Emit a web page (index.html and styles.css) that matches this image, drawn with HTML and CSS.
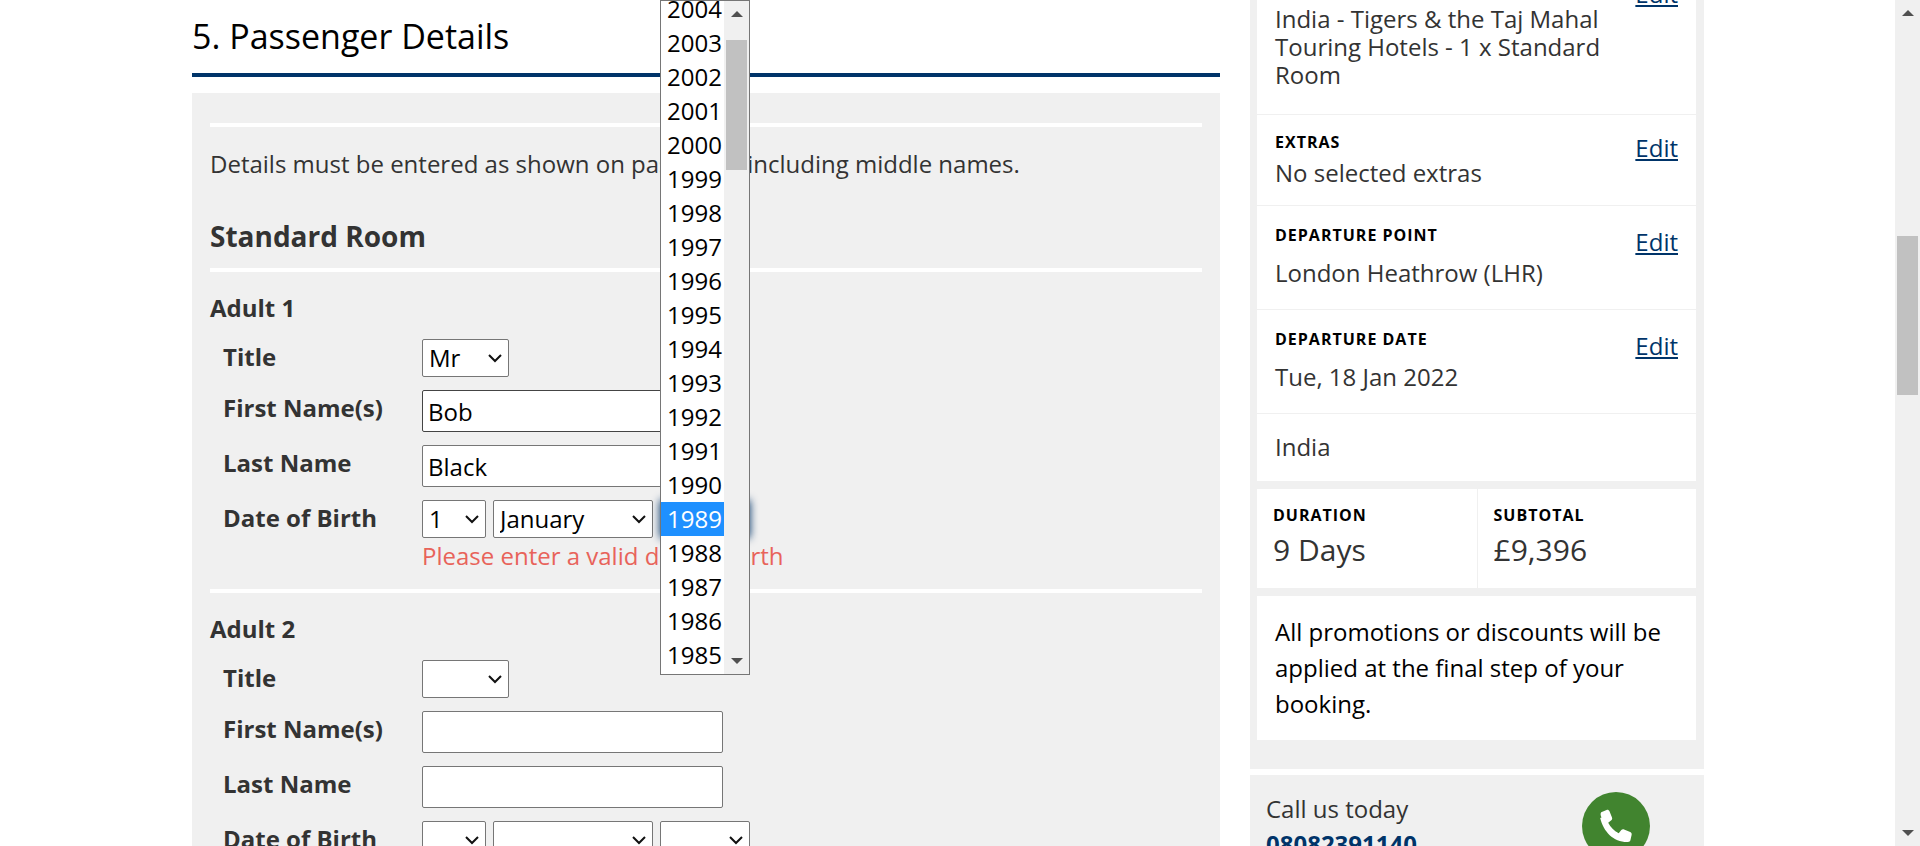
FILE: index.html
```html
<!DOCTYPE html>
<html lang="en">
<head>
<meta charset="utf-8">
<title>Passenger Details</title>
<link rel="stylesheet" href="styles.css">
</head>
<body>
<div class="page">
  <main class="main">
    <h1 class="step-title">5. Passenger Details</h1>
    <form class="panel">
      <hr class="rule rule-top">
      <p class="note">Details must be entered as shown on passports including middle names.</p>
      <h2 class="room">Standard Room</h2>
      <hr class="rule rule-room">

      <fieldset class="person">
        <legend class="person-name">Adult 1</legend>
        <div class="row">
          <label class="label" for="title1">Title</label>
          <select class="select w-title" id="title1"><option>Mr</option></select>
        </div>
        <div class="row">
          <label class="label" for="first1">First Name(s)</label>
          <input class="input input-hover" id="first1" type="text" value="Bob">
        </div>
        <div class="row">
          <label class="label" for="last1">Last Name</label>
          <input class="input" id="last1" type="text" value="Black">
        </div>
        <div class="row">
          <label class="label" for="day1">Date of Birth</label>
          <div class="dob">
            <select class="select w-day" id="day1"><option>1</option></select>
            <select class="select w-month" id="month1" aria-label="Month"><option>January</option></select>
            <div class="year-wrap">
              <select class="select w-year is-open" id="year1" aria-label="Year"><option></option></select>
              <div class="popup">
                <ul class="options" role="listbox" aria-label="Year">
                  <li class="option" role="option">2004</li>
                  <li class="option" role="option">2003</li>
                  <li class="option" role="option">2002</li>
                  <li class="option" role="option">2001</li>
                  <li class="option" role="option">2000</li>
                  <li class="option" role="option">1999</li>
                  <li class="option" role="option">1998</li>
                  <li class="option" role="option">1997</li>
                  <li class="option" role="option">1996</li>
                  <li class="option" role="option">1995</li>
                  <li class="option" role="option">1994</li>
                  <li class="option" role="option">1993</li>
                  <li class="option" role="option">1992</li>
                  <li class="option" role="option">1991</li>
                  <li class="option" role="option">1990</li>
                  <li class="option is-active" role="option" aria-selected="true">1989</li>
                  <li class="option" role="option">1988</li>
                  <li class="option" role="option">1987</li>
                  <li class="option" role="option">1986</li>
                  <li class="option" role="option">1985</li>
                </ul>
                <div class="scroll">
                  <svg class="arrow" viewBox="0 0 12 6"><path d="M0 6L6 0L12 6Z"/></svg>
                  <div class="track"><div class="thumb thumb-list"></div></div>
                  <svg class="arrow" viewBox="0 0 12 6"><path d="M0 0L6 6L12 0Z"/></svg>
                </div>
              </div>
            </div>
          </div>
        </div>
        <p class="error">Please enter a valid date of birth</p>
      </fieldset>
      <hr class="rule">

      <fieldset class="person">
        <legend class="person-name">Adult 2</legend>
        <div class="row">
          <label class="label" for="title2">Title</label>
          <select class="select w-title" id="title2"><option></option></select>
        </div>
        <div class="row">
          <label class="label" for="first2">First Name(s)</label>
          <input class="input" id="first2" type="text">
        </div>
        <div class="row">
          <label class="label" for="last2">Last Name</label>
          <input class="input" id="last2" type="text">
        </div>
        <div class="row">
          <label class="label" for="day2">Date of Birth</label>
          <div class="dob">
            <select class="select w-day" id="day2"><option></option></select>
            <select class="select w-month" id="month2" aria-label="Month"><option></option></select>
            <select class="select w-year" id="year2" aria-label="Year"><option></option></select>
          </div>
        </div>
      </fieldset>
    </form>
  </main>

  <aside class="side">
    <section class="summary">
      <div class="card">
        <div class="item item-rooms">
          <p class="item-text">India - Tigers &amp; the Taj Mahal Touring Hotels - 1 x Standard Room</p>
          <a class="edit" href="#">Edit</a>
        </div>
        <div class="item item-tight">
          <div>
            <h3 class="tag">Extras</h3>
            <p class="item-text">No selected extras</p>
          </div>
          <a class="edit" href="#">Edit</a>
        </div>
        <div class="item">
          <div>
            <h3 class="tag">Departure Point</h3>
            <p class="item-text">London Heathrow (LHR)</p>
          </div>
          <a class="edit" href="#">Edit</a>
        </div>
        <div class="item">
          <div>
            <h3 class="tag">Departure Date</h3>
            <p class="item-text">Tue, 18 Jan 2022</p>
          </div>
          <a class="edit" href="#">Edit</a>
        </div>
        <div class="item item-country">
          <p class="item-text">India</p>
        </div>
      </div>
      <div class="card stats">
        <div class="stat">
          <h3 class="tag">Duration</h3>
          <p class="figure">9 Days</p>
        </div>
        <div class="stat">
          <h3 class="tag">Subtotal</h3>
          <p class="figure">£9,396</p>
        </div>
      </div>
      <p class="card promo">All promotions or discounts will be applied at the final step of your booking.</p>
    </section>
    <section class="call">
      <div>
        <p class="call-text">Call us today</p>
        <a class="phone" href="#">08082391140</a>
      </div>
      <svg class="phone-icon" viewBox="0 0 68 68" aria-hidden="true">
        <circle cx="34" cy="34" r="34" fill="#41842f"/>
        <path fill="#fff" d="M19.500 25.500C18.500 23.500 18.200 21.400 19.200 20.200L24.600 17.900C25.900 17.500 27 18.100 27.500 19.300L30 25.400C30.400 26.500 30.200 27.500 29.300 28.200L26.200 30.700C28.600 35.400 32 38.800 36.700 41.200L39.300 38.100C40 37.200 41 36.900 42.100 37.400L48.200 40C49.400 40.500 50 41.600 49.600 42.900L48.400 48.300C48.100 49.400 47.200 50 46 50C32 50.500 21.500 40 18.200 26Z"/>
      </svg>
    </section>
  </aside>
</div>

<div class="scroll page-scroll">
  <svg class="arrow" viewBox="0 0 12 6"><path d="M0 6L6 0L12 6Z"/></svg>
  <div class="track"><div class="thumb thumb-page"></div></div>
  <svg class="arrow" viewBox="0 0 12 6"><path d="M0 0L6 6L12 0Z"/></svg>
</div>
</body>
</html>
```
FILE: styles.css
```css
* {
  box-sizing: border-box;
}

body {
  margin: 0;
  height: 100vh;
  overflow: hidden;
  display: flex;
  background: #fff;
  color: #333;
  font: 24px/36px "Open Sans", "Noto Sans", sans-serif;
}

h1, h2, h3, p, ul, fieldset, legend {
  margin: 0;
  padding: 0;
  border: 0;
}

.page {
  flex: 1;
  display: grid;
  grid-template-columns: minmax(0, 1fr) 454px;
  gap: 30px;
  align-items: start;
  padding: 0 191px 0 192px;
}

/* Passenger form */
.step-title {
  padding: 16px 0 17px;
  border-bottom: 4px solid #003469;
  color: #000;
  font-size: 34px;
  line-height: 40px;
  font-weight: 500;
}

.panel {
  margin-top: 16px;
  padding: 30px 18px;
  background: #f0f0f0;
}

.rule {
  height: 4px;
  margin: 15px 0 18px;
  border: 0;
  background: #fff;
}

.rule-top {
  margin: 0 0 19px;
}

.rule-room {
  margin-top: 12px;
}

.room {
  margin-top: 34px;
  font-size: 28px;
  line-height: 40px;
  font-weight: 700;
}

.person-name {
  font-weight: 700;
}

.row {
  display: flex;
  align-items: flex-start;
  margin-top: 13px;
  padding-left: 13px;
}

.label {
  width: 199px;
  font-weight: 700;
}

.input,
.select {
  margin: 0;
  border: 1px solid #767676;
  border-radius: 2px;
  background-color: #fff;
  color: #000;
  font: inherit;
}

.input {
  width: 301px;
  height: 42px;
  padding: 0 5px;
}

.input-hover {
  border-color: #444;
}

.select {
  appearance: none;
  height: 38px;
  padding: 0 6px;
  background-image: url("data:image/svg+xml,%3Csvg xmlns='http://www.w3.org/2000/svg' width='14' height='9'%3E%3Cpath d='M1 1L7 7L13 1' fill='none' stroke='%23111' stroke-width='2'/%3E%3C/svg%3E");
  background-repeat: no-repeat;
  background-position: right 6px center;
}

.w-title { width: 87px; }
.w-day { width: 64px; }
.w-month { width: 160px; }
.w-year { width: 90px; }

.dob {
  display: flex;
  gap: 7px;
}

.year-wrap {
  position: relative;
  display: flex;
}

.is-open {
  box-shadow: 0 0 8px #003469;
}

.error {
  padding-left: 212px;
  color: #e8635a;
}

/* Open year list */
.popup {
  position: absolute;
  right: 0;
  bottom: -137px;
  width: 90px;
  height: 675px;
  display: flex;
  border: 1px solid #767676;
  background: #fff;
  color: #000;
}

.options {
  flex: 1;
  display: flex;
  flex-direction: column;
  justify-content: flex-end;
  overflow: hidden;
  padding-bottom: 2px;
  list-style: none;
}

.option {
  flex: none;
  padding-left: 6px;
  line-height: 34px;
}

.is-active {
  background: #1e90ff;
  color: #fff;
}

.scroll {
  width: 25px;
  flex: none;
  display: flex;
  flex-direction: column;
  align-items: center;
  padding: 10px 2px;
  background: #f0f0f0;
}

.arrow {
  width: 12px;
  height: 6px;
  fill: #505050;
}

.track {
  flex: 1;
  align-self: stretch;
}

.thumb {
  background: #c1c1c1;
}

.thumb-list {
  height: 130px;
  margin-top: 23px;
}

.thumb-page {
  height: 159px;
  margin-top: 220px;
}

/* Booking summary */
.summary {
  display: flex;
  flex-direction: column;
  gap: 8px;
  margin-top: -42px;
  padding: 0 8px 29px 7px;
  background: #f0f0f0;
}

.card {
  background: #fff;
}

.item {
  display: flex;
  justify-content: space-between;
  align-items: flex-start;
  padding: 17px 18px 22px;
  border-bottom: 1px solid #f0f0f0;
  line-height: 28px;
}

.item .edit {
  margin-top: 5px;
}

.item .tag {
  margin-bottom: 12px;
}

.item-rooms {
  padding-bottom: 25px;
}

.item-rooms .item-text {
  max-width: 340px;
  padding-top: 30px;
}

.item-tight {
  padding: 15px 18px 18px;
}

.item-tight .edit {
  margin-top: 4px;
}

.item-tight .tag {
  margin-bottom: 5px;
}

.item-country {
  padding: 19px 18px 20px;
  border-bottom: 0;
}

.tag {
  color: #000;
  font-size: 16px;
  line-height: 24px;
  font-weight: 700;
  letter-spacing: 1px;
  text-transform: uppercase;
}

.edit {
  color: #003469;
  text-decoration: underline;
}

.stats {
  display: grid;
  grid-template-columns: 1fr 1fr;
}

.stat {
  padding: 14px 16px 18px;
}

.stat + .stat {
  border-left: 1px solid #f0f0f0;
}

.figure {
  margin-top: 3px;
  font-size: 30px;
  line-height: 40px;
}

.promo {
  padding: 18px;
  color: #000;
}

.call {
  display: flex;
  justify-content: space-between;
  align-items: flex-start;
  margin-top: 6px;
  padding: 17px 54px 20px 16px;
  background: #f0f0f0;
}

.call-text {
  line-height: 34px;
}

.phone {
  color: #003469;
  font-weight: 700;
  text-decoration: none;
}

.phone-icon {
  width: 68px;
  height: 68px;
}
```
